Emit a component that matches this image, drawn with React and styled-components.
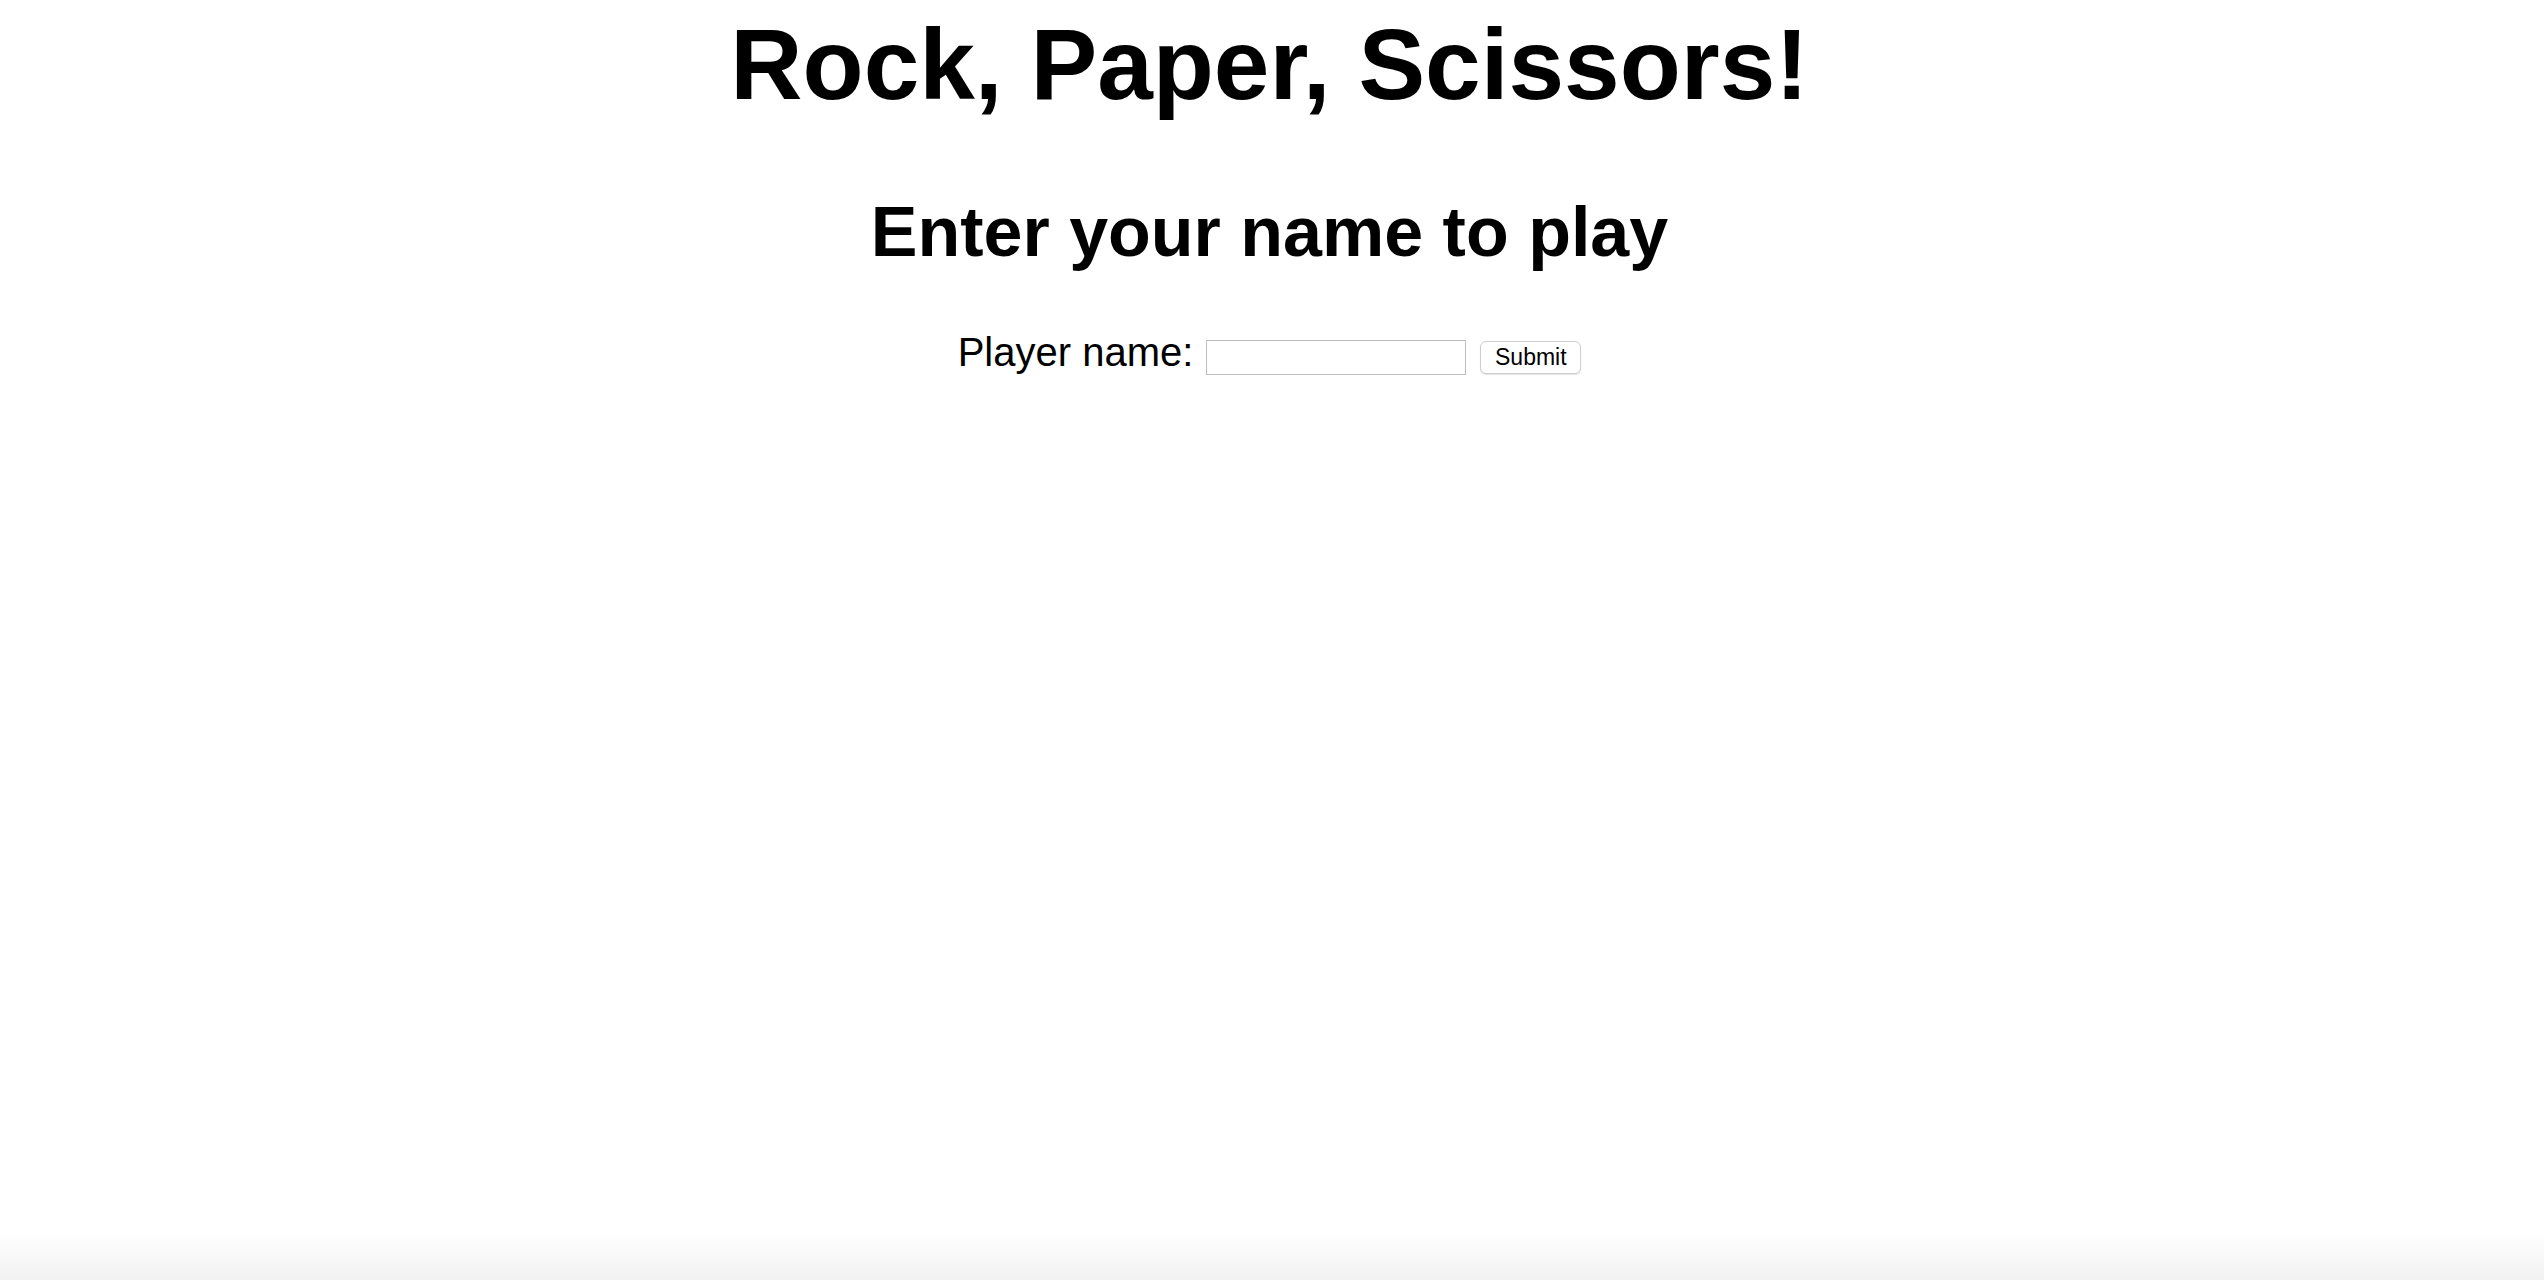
import styled, { createGlobalStyle } from 'styled-components';

const GlobalStyle = createGlobalStyle`
  html, body {
    margin: 0;
    padding: 0;
    background: #fff;
  }
  body {
    font-family: "Liberation Sans", Arial, sans-serif;
    color: #000;
  }
`;

const Page = styled.div`
  min-height: 100vh;
  box-sizing: border-box;
  padding: 7px 5px 0 0;
  display: flex;
  flex-direction: column;
  align-items: center;
  background: linear-gradient(to bottom, #fff calc(100% - 48px), #f1f1f1 100%);
`;

const Title = styled.h1`
  margin: 0;
  font-size: 100px;
  font-weight: bold;
  line-height: 115px;
  text-align: center;
`;

const Subtitle = styled.h2`
  margin: 70px 0 0;
  font-size: 70px;
  font-weight: bold;
  line-height: 80px;
  text-align: center;
`;

const Form = styled.form`
  margin-top: 57px;
  display: flex;
  align-items: flex-start;
  justify-content: center;
`;

const Label = styled.label`
  font-size: 40px;
  line-height: 46px;
`;

const NameInput = styled.input`
  box-sizing: border-box;
  width: 260px;
  height: 35px;
  margin: 11px 0 0 13px;
  padding: 2px 6px;
  border: 1px solid #bdbdbd;
  border-radius: 0;
  font-family: "Liberation Sans", Arial, sans-serif;
  font-size: 22px;
  outline: none;
`;

const SubmitButton = styled.button`
  box-sizing: border-box;
  width: 101px;
  height: 33px;
  margin: 12px 0 0 14px;
  padding: 0;
  background: #fff;
  border: 1px solid #cfcfcf;
  border-radius: 6px;
  box-shadow: 0 1px 1px rgba(0, 0, 0, 0.12);
  font-family: "Liberation Sans", Arial, sans-serif;
  font-size: 23px;
  color: #000;
  cursor: pointer;
`;

const App = () => (
  <>
    <GlobalStyle />
    <Page>
      <Title>Rock, Paper, Scissors!</Title>
      <Subtitle>Enter your name to play</Subtitle>
      <Form onSubmit={e => e.preventDefault()}>
        <Label htmlFor="player">Player name:</Label>
        <NameInput id="player" type="text" />
        <SubmitButton type="submit">Submit</SubmitButton>
      </Form>
    </Page>
  </>
);

export default App;
